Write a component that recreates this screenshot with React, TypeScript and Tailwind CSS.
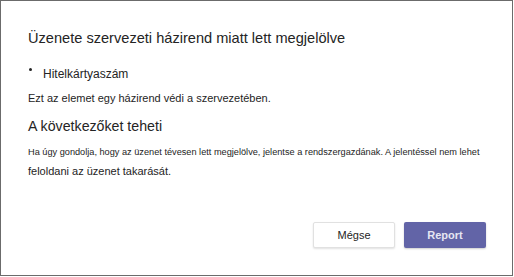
import React from "react";

const App = () => {
  return (
    <div className="w-[514px] h-[277px] bg-white" style={{ fontFamily: '"Liberation Sans", Arial, sans-serif' }}>
      <div className="w-[513px] h-[276px] border border-[#6b6b6b] flex flex-col pt-[27px] pl-[27px] pr-[26px] pb-[27px] text-[#242424]">
        <h1 className="text-[14.6px] leading-[20px] font-normal whitespace-nowrap">
          Üzenete szervezeti házirend miatt lett megjelölve
        </h1>

        <ul className="mt-[18px]">
          <li className="flex items-start text-[12px] leading-[16px] whitespace-nowrap">
            <span className="mt-[2px] ml-[1px] w-[3px] h-[3px] rounded-full bg-[#242424]" />
            <span className="ml-[11px]">Hitelkártyaszám</span>
          </li>
        </ul>

        <p className="mt-[8px] text-[11px] leading-[16px] whitespace-nowrap">
          Ezt az elemet egy házirend védi a szervezetében.
        </p>

        <h2 className="mt-[10px] text-[14.2px] leading-[20px] font-normal whitespace-nowrap">
          A következőket teheti
        </h2>

        <p className="mt-[9px] text-[9.2px] leading-[14px] whitespace-nowrap">
          Ha úgy gondolja, hogy az üzenet tévesen lett megjelölve, jelentse a rendszergazdának. A jelentéssel nem lehet
        </p>
        <p className="mt-[4px] text-[11px] leading-[16px] whitespace-nowrap">
          feloldani az üzenet takarását.
        </p>

        <div className="mt-auto flex justify-end gap-[9px]">
          <button className="w-[82px] h-[26px] bg-white border border-[#e1e1e1] rounded-[2px] shadow-[0_1px_2px_rgba(0,0,0,0.12)] text-[11px] text-[#242424]">
            Mégse
          </button>
          <button className="w-[82px] h-[26px] bg-[#6264a7] rounded-[2px] shadow-[0_1px_2px_rgba(0,0,0,0.2)] text-[11px] font-bold text-[#e6e6f2]">
            Report
          </button>
        </div>
      </div>
    </div>
  );
};

export default App;
